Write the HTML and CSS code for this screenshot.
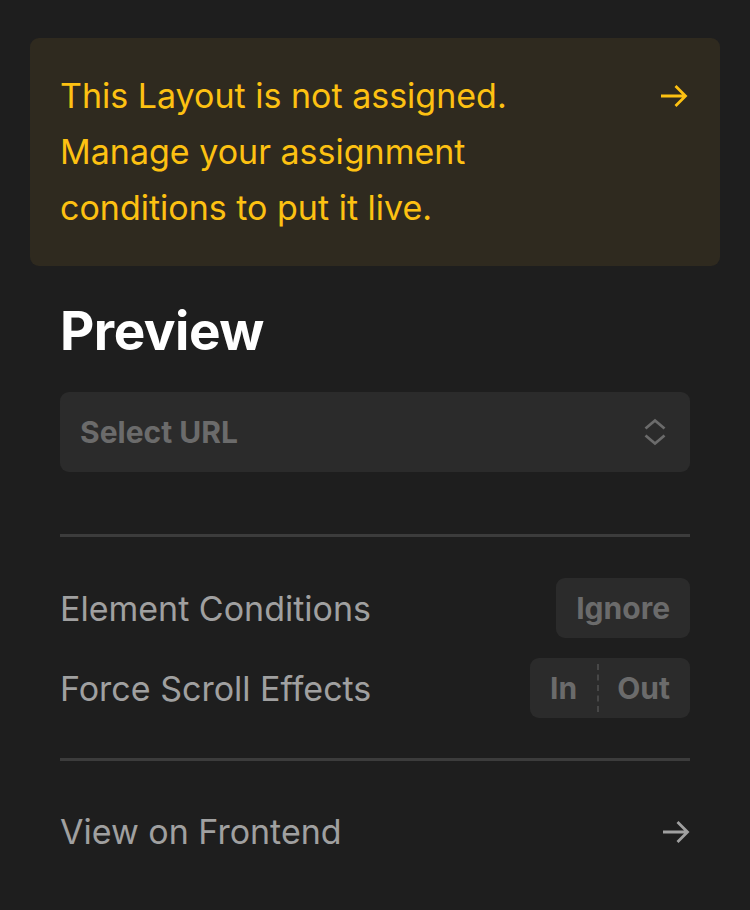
FILE: index.html
```html
<!DOCTYPE html>
<html>
<head>
    <title>Preview</title>
    <link rel="stylesheet" href="styles.css">
</head>
<body>
    <div class="panel">
        <a class="notice" href="#">
            <span class="notice-text">This Layout is not assigned.<br>
            Manage your assignment<br>
            conditions to put it live.</span>
            <svg class="arrow" width="28" height="22" viewBox="0 0 28 22">
                <path d="M1 11h25M15.5 1l10 10-10 10" fill="none" stroke="currentColor" stroke-width="2.8"/>
            </svg>
        </a>

        <div class="section">
            <h1 class="title">Preview</h1>
            <div class="select">
                <span>Select URL</span>
                <svg class="chevrons" width="22" height="30" viewBox="0 0 22 30">
                    <path d="M1.5 11.5l9.5-8 9.5 8M1.5 18.5l9.5 8 9.5-8" fill="none" stroke="currentColor" stroke-width="2.8"/>
                </svg>
            </div>

            <hr class="divider">

            <div class="row">
                <span class="label">Element Conditions</span>
                <div class="pill"><span class="opt">Ignore</span></div>
            </div>
            <div class="row">
                <span class="label">Force Scroll Effects</span>
                <div class="pill">
                    <span class="opt first">In</span>
                    <span class="opt sep">Out</span>
                </div>
            </div>

            <hr class="divider second">

            <a class="link-row" href="#">
                <span class="label">View on Frontend</span>
                <svg class="arrow" width="28" height="22" viewBox="0 0 28 22">
                    <path d="M1 11h25M15.5 1l10 10-10 10" fill="none" stroke="currentColor" stroke-width="2.8"/>
                </svg>
            </a>
        </div>
    </div>
</body>
</html>
```

FILE: styles.css
```css
:root {
    --bg: #1e1e1e;
    --field: #2b2b2b;
    --muted: #6b6b6b;
    --label: #a0a0a0;
    --yellow: #fdc112;
    --line: #3c3c3c;
}

html, body {
    margin: 0;
    background: var(--bg);
}

body {
    font-family: Inter, 'Noto Sans', sans-serif;
    padding: 38px 30px 0 30px;
    min-height: 100vh;
    box-sizing: border-box;
}

.notice {
    display: flex;
    justify-content: space-between;
    align-items: flex-start;
    background: #2f2a1f;
    border-radius: 9px;
    padding: 30px 32px 30px 30px;
    color: var(--yellow);
    text-decoration: none;
    font-size: 34px;
    line-height: 56px;
}

.notice .arrow {
    margin-top: 17px;
}

.section {
    padding: 0 30px;
}

.title {
    color: #fff;
    font-size: 53px;
    font-weight: 700;
    margin: 35px 0 31px 0;
    line-height: 60px;
    letter-spacing: -0.5px;
}

.select {
    display: flex;
    justify-content: space-between;
    align-items: center;
    height: 80px;
    box-sizing: border-box;
    background: var(--field);
    border-radius: 9px;
    padding: 0 24px 0 20px;
    color: var(--muted);
    font-size: 30px;
    font-weight: 700;
}

.divider {
    border: 0;
    height: 3px;
    background: var(--line);
    margin: 62px 0 41px 0;
}

.divider.second {
    margin: 40px 0 0 0;
}

.row {
    display: flex;
    justify-content: space-between;
    align-items: center;
    margin-bottom: 20px;
}

.row:last-of-type {
    margin-bottom: 0;
}

.label {
    color: var(--label);
    font-size: 34px;
}

.pill {
    display: flex;
    align-items: center;
    height: 60px;
    background: var(--field);
    border-radius: 9px;
    color: var(--muted);
    font-size: 30px;
    font-weight: 700;
}

.opt {
    padding: 0 20px;
}

.opt.first {
    padding-right: 20px;
}

.opt.sep {
    border-left: 2px dashed #474747;
    height: 48px;
    line-height: 48px;
    padding-left: 18px;
}

.link-row {
    display: flex;
    justify-content: space-between;
    align-items: center;
    text-decoration: none;
    color: var(--label);
    margin-top: 50px;
}
```
